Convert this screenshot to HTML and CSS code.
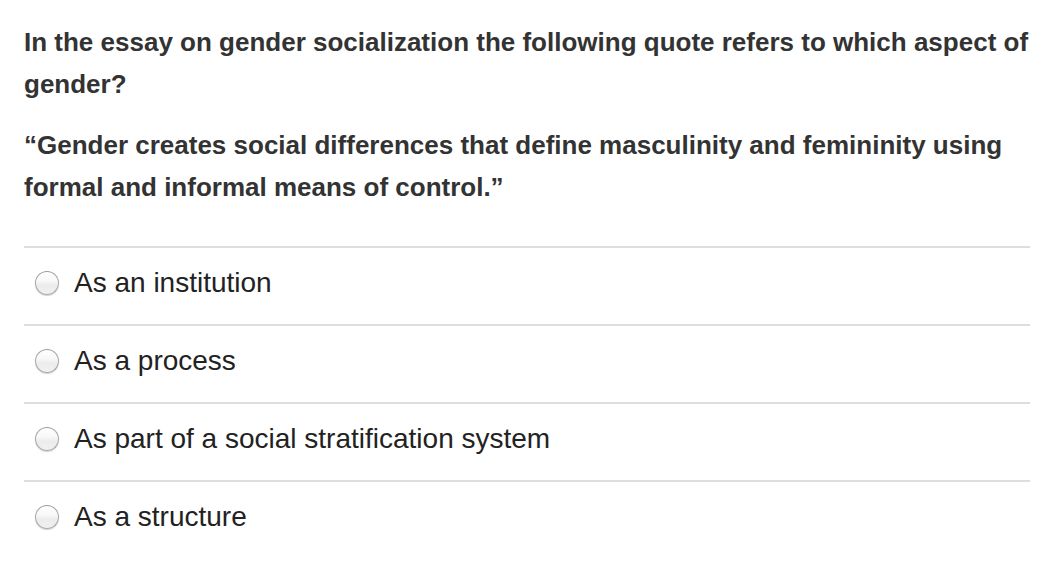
FILE: index.html
```html
<!DOCTYPE html>
<html>
<head>
<meta charset="utf-8">
<link rel="stylesheet" href="styles.css">
</head>
<body>
<div class="quiz">
  <div class="question">
    <p class="q">In the essay on gender socialization the following quote refers to which aspect of gender?</p>
    <p class="q">“Gender creates social differences that define masculinity and femininity using formal and informal means of control.”</p>
  </div>
  <ul class="answers">
    <li class="answer"><span class="radio"></span><span class="label">As an institution</span></li>
    <li class="answer"><span class="radio"></span><span class="label">As a process</span></li>
    <li class="answer"><span class="radio"></span><span class="label">As part of a social stratification system</span></li>
    <li class="answer"><span class="radio"></span><span class="label">As a structure</span></li>
  </ul>
</div>
</body>
</html>
```
FILE: styles.css
```css
html, body {
  margin: 0;
  padding: 0;
  background: #fff;
}
body {
  font-family: "Liberation Sans", Arial, sans-serif;
  color: #2d3b45;
}
.quiz {
  width: 1006px;
  padding: 21px 0 0 24px;
}
.question {
  padding-bottom: 38px;
}
.q {
  margin: 0 0 19px 0;
  font-weight: bold;
  font-size: 26px;
  line-height: 42px;
  color: #333;
}
.q:last-child {
  margin-bottom: 0;
}
.answers {
  list-style: none;
  margin: 0;
  padding: 0;
}
.answer {
  display: flex;
  align-items: center;
  height: 76px;
  border-top: 2px solid #dedede;
}
.radio {
  box-sizing: border-box;
  width: 24px;
  height: 24px;
  margin-left: 11px;
  margin-right: 15px;
  border-radius: 50%;
  border: 1px solid #a8a8a8;
  border-top-color: #9c9c9c;
  background: linear-gradient(#ffffff 0%, #f8f8f8 40%, #ececec 60%, #f0f0f0 100%);
  box-shadow: 0 1px 1px rgba(0,0,0,0.18);
  flex: none;
  position: relative;
  top: -3px;
}
.label {
  font-size: 28px;
  color: #222;
  line-height: 32px;
  position: relative;
  top: -3px;
}
```
